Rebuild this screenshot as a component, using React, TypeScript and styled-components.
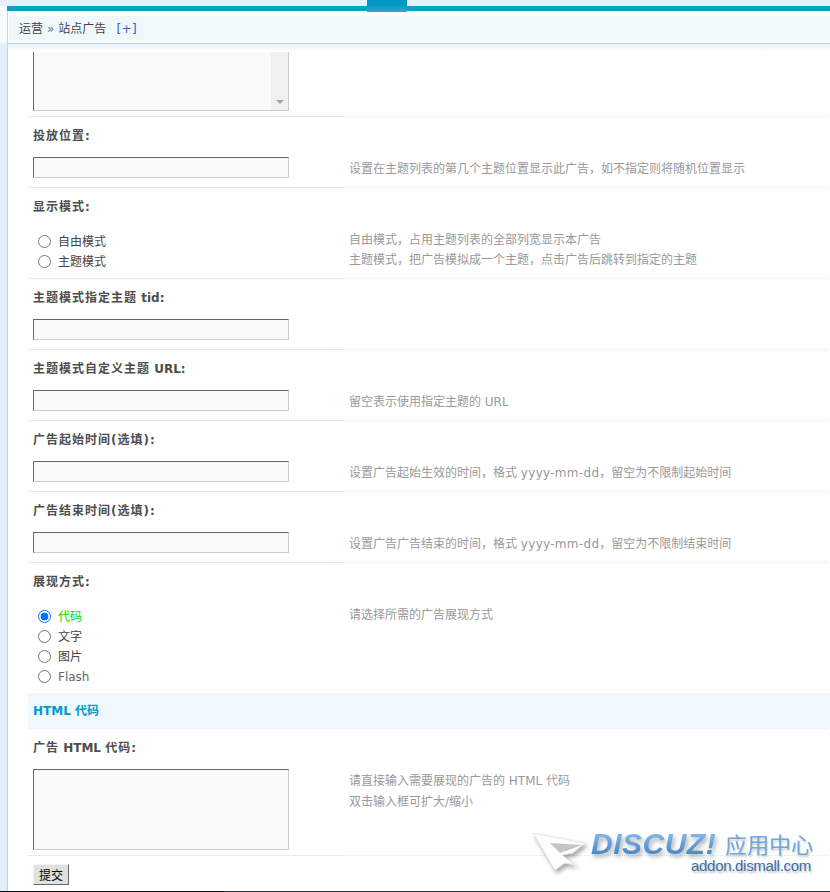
import React from "react";
import styled, { createGlobalStyle } from "styled-components";

const fontStack = `"DejaVu Sans", "Noto Sans CJK SC", sans-serif`;

const GlobalStyle = createGlobalStyle`
  html, body {
    margin: 0;
    padding: 0;
    background: #fff;
    height: 892px;
    overflow: hidden;
  }
  body {
    font: 12px/20px ${fontStack};
    color: #444;
  }
`;

const Page = styled.div`
  position: relative;
  width: 830px;
  height: 892px;
  overflow: hidden;
  display: flex;
  flex-direction: column;
  background: #fff;
`;

const TopStrip = styled.div`
  flex: none;
  height: 6px;
  background: #e2f0f9;
  display: flex;
  justify-content: flex-end;
  padding-right: 423px;
`;

const ActiveTab = styled.div`
  width: 40px;
  height: 12px;
  background: linear-gradient(#0095c2 40%, #38a9cf);
  position: relative;
  z-index: 1;
`;

const Frame = styled.div`
  flex: 1;
  min-height: 0;
  display: flex;
`;

const SideRail = styled.div`
  flex: none;
  width: 8px;
  background: linear-gradient(#f6fbfe 0 34px, #e0eff9 40px);
  border-right: 1px solid #bcd6e4;
  box-sizing: border-box;
`;

const Main = styled.div`
  flex: 1;
  min-width: 0;
  display: flex;
  flex-direction: column;
`;

const BlueBar = styled.div`
  flex: none;
  height: 5px;
  margin-left: -1px;
  background: #009fcd;
`;

const Crumbs = styled.div`
  flex: none;
  height: 25px;
  margin: 5px 0 2px 1px;
  padding-left: 10px;
  background: #f0f8fc;
  color: #444;
  line-height: 27px;
  display: flex;
  gap: 4px;
`;

const CrumbAdd = styled.span`
  color: #2b62b8;
  margin-left: 6px;
  letter-spacing: 0.4px;
`;

const CrumbSep = styled.span`
  color: #5f7488;
  font-size: 12px;
`;

const HeadLine = styled.div`
  flex: none;
  height: 9px;
  border-top: 1px solid #bcd3de;
  box-sizing: border-box;
  background: linear-gradient(#eaf4fb, #fff);
`;

const Form = styled.div`
  flex: 1;
  min-height: 0;
  padding-left: 20px;
  display: flex;
  flex-direction: column;
`;

const Line = styled.div<{ $dotted?: boolean }>`
  flex: none;
  height: 1px;
  background: repeating-linear-gradient(90deg, #d5ebf8 0 1px, transparent 1px 2px);
  position: relative;

  &::before {
    content: "";
    display: ${(p) => (p.$dotted ? "none" : "block")};
    position: absolute;
    left: 0;
    top: 0;
    width: 317px;
    height: 1px;
    background: #dfecf7;
  }
`;

const Label = styled.div`
  height: 36px;
  padding-left: 5px;
  line-height: 38px;
  font-weight: 700;
  color: #4d4d4d;
`;

const Cn = styled.span`
  letter-spacing: 1px;
`;

const Value = styled.div`
  display: grid;
  grid-template-columns: 316px 1fr;
`;

const Control = styled.div<{ $bottom?: number }>`
  padding: 4px 0 ${(p) => p.$bottom ?? 9}px 5px;
`;

const Tip = styled.div`
  padding: 6px 0 0 5px;
  color: #999;
`;

const TipLine = styled.div<{ $height?: number }>`
  line-height: ${(p) => p.$height ?? 20}px;
`;

const Latin = styled.span`
  letter-spacing: 0.3px;
`;

const TextInput = styled.div`
  width: 256px;
  height: 21px;
  box-sizing: border-box;
  background: #f9f9f9;
  border: 1px solid;
  border-color: #666 #ccc #ccc #666;
`;

const CutArea = styled.div`
  flex: none;
  width: 256px;
  height: 59px;
  margin: 0 0 5px 5px;
  box-sizing: border-box;
  background: #f9f9f9;
  border: 1px solid;
  border-color: transparent #ccc #ccc #666;
  border-top: 0;
  padding-left: 237px;
`;

const ScrollTrack = styled.div`
  height: 100%;
  background: #f0f0f0;
  display: flex;
  align-items: flex-end;
  justify-content: center;
  padding-bottom: 6px;
  box-sizing: border-box;
`;

const ScrollArrow = styled.div`
  width: 0;
  height: 0;
  border-left: 4px solid transparent;
  border-right: 4px solid transparent;
  border-top: 4px solid #a3a3a3;
`;

const BigArea = styled.div`
  width: 256px;
  height: 81px;
  box-sizing: border-box;
  background: #f9f9f9;
  border: 1px solid;
  border-color: #666 #ccc #ccc #666;
`;

const Radios = styled.div`
  margin-top: 3px;
`;

const RadioRow = styled.div<{ $on?: boolean }>`
  height: 20px;
  display: flex;
  align-items: center;
  padding-left: 5px;
  gap: 7px;
  color: ${(p) => (p.$on ? "#00d800" : "#444")};
`;

const RadioDot = styled.span<{ $on?: boolean }>`
  width: 13px;
  height: 13px;
  box-sizing: border-box;
  border-radius: 50%;
  border: 1px solid ${(p) => (p.$on ? "#0075ff" : "#767676")};
  background: ${(p) => (p.$on ? "radial-gradient(circle, #0075ff 0 3.6px, #fff 4.2px)" : "#fff")};
  flex: none;
`;

const RadioText = styled.span`
  margin-top: 2px;
`;

const FlashText = styled.span`
  color: #666;
`;

const SectionHead = styled.div`
  flex: none;
  height: 35px;
  padding-left: 5px;
  background: #f0f7fd;
  line-height: 37px;
  font-weight: 700;
  color: #09c;
`;

const SubmitRow = styled.div`
  padding: 8px 0 0 5px;
`;

const SubmitButton = styled.button`
  display: block;
  width: 36px;
  height: 21px;
  padding: 0;
  font: 12px/19px "Noto Sans CJK SC", sans-serif;
  color: #000;
  background: #e0e0e0;
  border: 1px solid;
  border-color: #f4f4f4 #666 #666 #f4f4f4;
`;

const BottomBar = styled.div`
  position: absolute;
  left: 0;
  right: 0;
  bottom: 0;
  height: 1px;
  background: linear-gradient(90deg, #0c0c0c 0 27%, #2a3e46 27%);
`;

const Watermark = styled.div`
  position: absolute;
  left: 532px;
  top: 830px;
  width: 290px;
  height: 50px;
`;

const PlaneIcon = styled.svg`
  position: absolute;
  left: 0;
  top: 3px;
  filter: drop-shadow(2px 3px 2px rgba(0, 0, 0, 0.35));
`;

const BrandName = styled.span`
  position: absolute;
  left: 59px;
  top: -3px;
  font: italic 700 30px/34px "Liberation Sans", sans-serif;
  letter-spacing: 0.5px;
  background: linear-gradient(#7db4e8 25%, #4a86c6 80%);
  -webkit-background-clip: text;
  background-clip: text;
  color: transparent;
  filter: drop-shadow(2px 3px 2px rgba(0, 0, 0, 0.3));
`;

const BrandCn = styled.span`
  position: absolute;
  left: 193px;
  top: -3px;
  font: 400 22px/32px "Noto Sans CJK SC", sans-serif;
  color: #6ea6df;
  text-shadow: 1px 2px 2px rgba(0, 0, 0, 0.2);
`;

const BrandUrl = styled.span`
  position: absolute;
  left: 159px;
  top: 27px;
  font: 400 15px/18px "Liberation Sans", sans-serif;
  letter-spacing: -0.3px;
  color: #3a6ea8;
  text-shadow: 1px 2px 2px rgba(0, 0, 0, 0.25);
`;

interface RadioItem {
  text: React.ReactNode;
  on?: boolean;
}

const RadioList = ({ items }: { items: RadioItem[] }) => (
  <Radios>
    {items.map((item, i) => (
      <RadioRow key={i} $on={item.on}>
        <RadioDot $on={item.on} />
        <RadioText>{item.text}</RadioText>
      </RadioRow>
    ))}
  </Radios>
);

const inputRows = [
  {
    key: "url",
    label: (
      <>
        <Cn>主题模式自定义主题</Cn> URL:
      </>
    ),
    tip: "留空表示使用指定主题的 URL",
  },
  {
    key: "start",
    label: <Cn>广告起始时间(选填):</Cn>,
    tip: (
      <>
        设置广告起始生效的时间，格式 <Latin>yyyy-mm-dd</Latin>，留空为不限制起始时间
      </>
    ),
  },
  {
    key: "end",
    label: <Cn>广告结束时间(选填):</Cn>,
    tip: (
      <>
        设置广告广告结束的时间，格式 <Latin>yyyy-mm-dd</Latin>，留空为不限制结束时间
      </>
    ),
  },
];

export default function App() {
  return (
    <Page>
      <GlobalStyle />
      <TopStrip>
        <ActiveTab />
      </TopStrip>
      <Frame>
        <SideRail />
        <Main>
          <BlueBar />
          <Crumbs>
            运营 <CrumbSep>»</CrumbSep> 站点广告 <CrumbAdd>[+]</CrumbAdd>
          </Crumbs>
          <HeadLine />
          <Form>
            <CutArea>
              <ScrollTrack>
                <ScrollArrow />
              </ScrollTrack>
            </CutArea>
            <Line />

            <Label>
              <Cn>投放位置:</Cn>
            </Label>
            <Value>
              <Control>
                <TextInput />
              </Control>
              <Tip>设置在主题列表的第几个主题位置显示此广告，如不指定则将随机位置显示</Tip>
            </Value>
            <Line />

            <Label>
              <Cn>显示模式:</Cn>
            </Label>
            <Value>
              <Control $bottom={7}>
                <RadioList items={[{ text: "自由模式" }, { text: "主题模式" }]} />
              </Control>
              <Tip>
                <TipLine>自由模式，占用主题列表的全部列宽显示本广告</TipLine>
                <TipLine>主题模式，把广告模拟成一个主题，点击广告后跳转到指定的主题</TipLine>
              </Tip>
            </Value>
            <Line />

            <Label>
              <Cn>主题模式指定主题</Cn> tid:
            </Label>
            <Value>
              <Control>
                <TextInput />
              </Control>
            </Value>
            <Line />

            {inputRows.map((row) => (
              <React.Fragment key={row.key}>
                <Label>{row.label}</Label>
                <Value>
                  <Control>
                    <TextInput />
                  </Control>
                  <Tip>{row.tip}</Tip>
                </Value>
                <Line />
              </React.Fragment>
            ))}

            <Label>
              <Cn>展现方式:</Cn>
            </Label>
            <Value>
              <Control $bottom={7}>
                <RadioList
                  items={[
                    { text: "代码", on: true },
                    { text: "文字" },
                    { text: "图片" },
                    { text: <FlashText>Flash</FlashText> },
                  ]}
                />
              </Control>
              <Tip>请选择所需的广告展现方式</Tip>
            </Value>

            <SectionHead>HTML 代码</SectionHead>
            <Line $dotted />

            <Label>
              <Cn>广告</Cn> HTML <Cn>代码:</Cn>
            </Label>
            <Value>
              <Control $bottom={5}>
                <BigArea />
              </Control>
              <Tip>
                <TipLine $height={21}>请直接输入需要展现的广告的 HTML 代码</TipLine>
                <TipLine $height={21}>双击输入框可扩大/缩小</TipLine>
              </Tip>
            </Value>
            <Line />

            <SubmitRow>
              <SubmitButton>提交</SubmitButton>
            </SubmitRow>
          </Form>
        </Main>
      </Frame>
      <BottomBar />
      <Watermark>
        <PlaneIcon width="56" height="40" viewBox="0 0 56 40">
          <path d="M1 0 L53 10 L41 20 L30 22 L43 32 L33 30 L23 37 Z" fill="#fdfdfd" stroke="#e6e6e6" strokeWidth="1" />
          <path d="M18 10 L50 12 L28 20 Z" fill="#c4c4c4" />
        </PlaneIcon>
        <BrandName>DISCUZ!</BrandName>
        <BrandCn>应用中心</BrandCn>
        <BrandUrl>addon.dismall.com</BrandUrl>
      </Watermark>
    </Page>
  );
}
